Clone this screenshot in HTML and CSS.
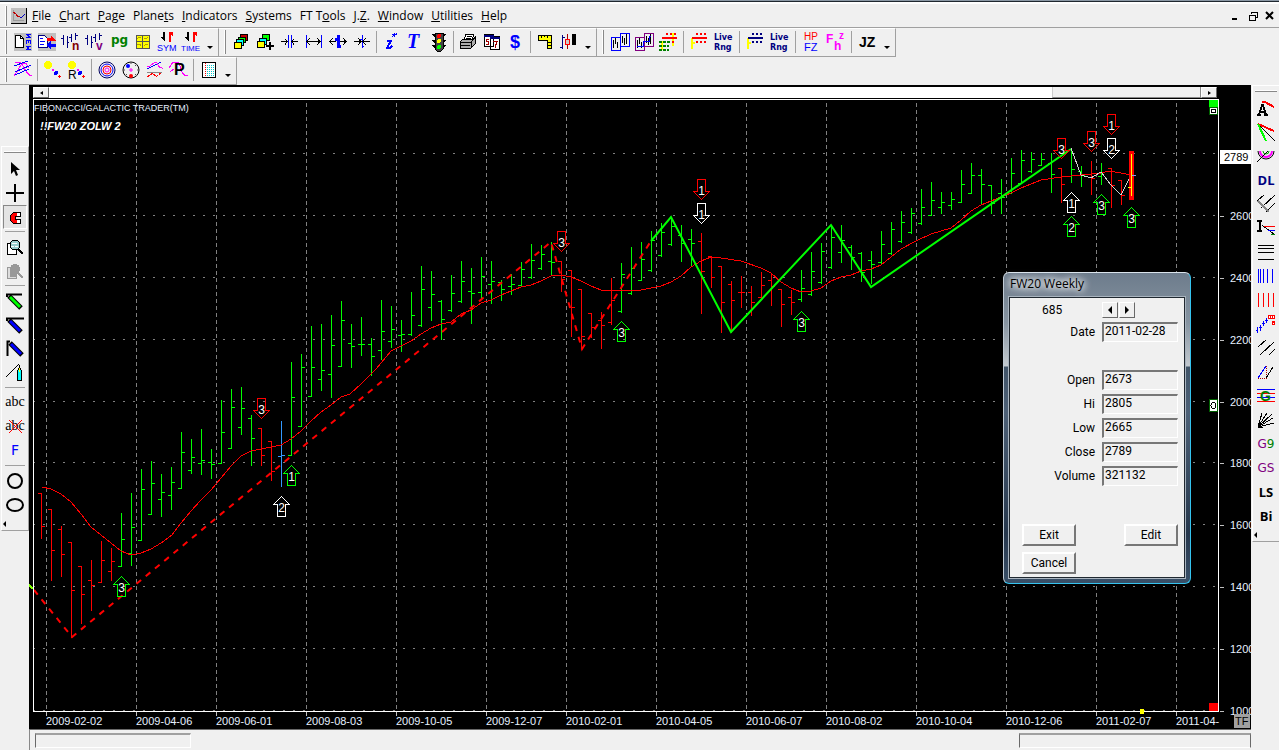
FILE: index.html
```html
<!DOCTYPE html>
<html lang="en">
<head>
<meta charset="utf-8">
<title>Galactic Trader</title>
<link rel="stylesheet" href="styles.css">
</head>
<body>
<div class="app">
  <div class="caption-edge"></div>
  <nav class="menubar">
    <span class="grip"></span>
    <svg class="doc-icon" viewBox="0 0 16 16"><path d="M0 0h16v16H0z" fill="#c0c0c0"/><path d="M15.500 0v15.500H0" fill="none" stroke="#000"/><path d="M2 2v10h11" fill="none" stroke="#999"/><path d="M2 4l3 2 2 3 2-1" fill="none" stroke="#c00000"/><path d="M9 9h2l3-3" fill="none" stroke="#0000c0"/></svg>
    <button class="menu"><u>F</u>ile</button>
    <button class="menu"><u>C</u>hart</button>
    <button class="menu"><u>P</u>age</button>
    <button class="menu">Plane<u>t</u>s</button>
    <button class="menu"><u>I</u>ndicators</button>
    <button class="menu"><u>S</u>ystems</button>
    <button class="menu">FT T<u>o</u>ols</button>
    <button class="menu">J.<u>Z</u>.</button>
    <button class="menu"><u>W</u>indow</button>
    <button class="menu"><u>U</u>tilities</button>
    <button class="menu"><u>H</u>elp</button>
    <span class="window-buttons">
      <button aria-label="Minimize"><svg viewBox="0 0 10 10"><path d="M1 8h5" stroke="#000" stroke-width="2"/></svg></button>
      <button aria-label="Restore"><svg viewBox="0 0 10 10"><path d="M3 3V1h6v5H7M3 1.500h6M1 4h6v5H1zM1 4.500h6" fill="none" stroke="#000"/></svg></button>
      <button aria-label="Close"><svg class="smooth" viewBox="0 0 10 10"><path d="M1 1l7 7M8 1L1 8" stroke="#000" stroke-width="2"/></svg></button>
    </span>
  </nav>

  <div class="toolrow">
    <div class="toolbar">
      <span class="grip"></span>
      <button aria-label="New chart"><svg viewBox="0 0 20 20"><path d="M1 1h18v18H1z" fill="#c0c0c0"/><path d="M2.500 3.500h5l3 3v9h-8z" fill="#fff" stroke="#000"/><path d="M7.500 3.500v3h3" fill="none" stroke="#000"/><path d="M13 2.500h5M13 5.500h5M14 2.500l3 3M13.500 8v4M17.500 8v4M15.500 8v3M13 8.500h5M13 14.500h5M13 17.500h5M17 14.500l-3 1.500 3 1.500" fill="none" stroke="#00f"/></svg></button>
      <button aria-label="Swap chart"><svg viewBox="0 0 20 20"><path d="M1 1h18v18H1z" fill="#c0c0c0"/><path d="M1.500 3.500h6l3 3v9h-9z" fill="#fff" stroke="#000080"/><path d="M3 6.500h3M3 9.500h5M3 12.500h4" stroke="#00f"/><path d="M10 6h4V3l5 6h-9z" fill="red"/><path d="M19 12h-5V9l-5 4 5 4v-2h5z" fill="#00f"/></svg></button>
      <button aria-label="Chart n"><svg viewBox="0 0 20 20"><path d="M2.500 3v10M0 6.500h2M6.500 4v12M6 10.500h2M10.500 2v8M8 5.500h2M14.500 1v7M14 3.500h3" stroke="#000080"/><text x="11" y="18" class="t12 maroon">n</text></svg></button>
      <button aria-label="Chart v"><svg viewBox="0 0 20 20"><path d="M2.500 3v10M0 6.500h2M6.500 4v12M6 10.500h2M10.500 2v8M8 5.500h2M14.500 1v7M14 3.500h3" stroke="#000080"/><text x="11" y="18" class="t12 purple">v</text></svg></button>
      <button aria-label="Page"><svg viewBox="0 0 20 20"><text x="2" y="12" class="t12 green mono">pg</text></svg></button>
      <button aria-label="Grid"><svg viewBox="0 0 20 20"><path d="M3.500 3.500h13v13h-13z" fill="#ff0" stroke="#555"/><path d="M9.500 3v13M3 9.500h13" stroke="#555"/><path d="M4 7l2-2 2 1M11 6l2 1 2-2M4 13l3-1 1 2M11 14l2-2 2 1" fill="none" stroke="#b0a000"/></svg></button>
      <button aria-label="Symbol"><svg viewBox="0 0 20 20"><path d="M6 0h2v10l-5-5h3z"/><path d="M12 0h4v5l-2-2v7h-2z" fill="red"/><text x="0" y="19" class="t9 blue">SYM</text></svg></button>
      <button aria-label="Time"><svg viewBox="0 0 20 20"><path d="M6 0h2v10l-5-5h3z"/><path d="M12 0h4v5l-2-2v7h-2z" fill="red"/><text x="0" y="19" class="t8 blue">TIME</text></svg></button>
      <button class="more" aria-label="More"></button>
    </div>
    <div class="toolbar">
      <span class="grip"></span>
      <button aria-label="Cascade"><svg viewBox="0 0 20 20"><path d="M8.500 2.500h7v6h-7z" fill="#c00000" stroke="#000"/><path d="M6.500 5.500h7v5h-7z" fill="#0f0" stroke="#000"/><path d="M4.500 7.500h7v6h-7z" fill="#0ff" stroke="#000"/><path d="M2.500 10.500h7v6h-7z" fill="#ff0" stroke="#000"/></svg></button>
      <button aria-label="Add to cascade"><svg viewBox="0 0 20 20"><path d="M6.500 2.500h7v6h-7z" fill="#0f0" stroke="#000"/><path d="M3.500 6.500h7v6h-7z" fill="#0ff" stroke="#000"/><path d="M1.500 9.500h7v6h-7z" fill="#ff0" stroke="#000"/><path d="M14 10v8M10 14h8" stroke="#000" stroke-width="2"/></svg></button>
      <button aria-label="Compress"><svg viewBox="0 0 20 20"><path d="M8.500 3v13M11.500 3v13" stroke="#00f"/><path d="M1 9.500h6M5 7l2 2.500-2 3M18 9.500h-6M14 7l-2 2.500 2 3" fill="none" stroke="#000"/></svg></button>
      <button aria-label="Expand"><svg viewBox="0 0 20 20"><path d="M2.500 3v13M17.500 3v13" stroke="#00f"/><path d="M3 9.500h13M6 6L3 9.500 6 13M13 6l3 3.500-3 3.500" fill="none" stroke="#000"/></svg></button>
      <button aria-label="Widen bars"><svg viewBox="0 0 20 20"><path d="M10.500 3v13M7 7.500h3M10 14.500h3" stroke="#00f" stroke-width="3"/><path d="M2 9.500h6M5 6L2 9.500 5 13M12 9.500h6M15 6l3 3.500-3 3.500" fill="none" stroke="#000"/></svg></button>
      <button aria-label="Narrow bars"><svg viewBox="0 0 20 20"><path d="M10.500 3v13M10 14.500h2M8 7.500h2" stroke="#00f"/><path d="M2 9.500h7M6 6l3 3.500L6 13M18 9.500h-7M14 6l-3 3.500 3 3.500" fill="none" stroke="#000"/></svg></button>
      <span class="sep"></span>
      <button aria-label="Info"><svg viewBox="0 0 20 20"><path d="M11 2.500h5M13.500 1v4M11 5l5-4" stroke="#00f"/><path d="M6 8.500h4L6 16h3l2-2" fill="none" stroke="#00f" stroke-width="2"/></svg></button>
      <button aria-label="Text"><svg viewBox="0 0 20 20"><text x="2" y="16" class="t20 blue serif">T</text></svg></button>
      <button aria-label="Signals"><svg viewBox="0 0 20 20"><path d="M6 1h8v16l-2 2H8l-2-2z" fill="#444" stroke="#000"/><path d="M2 2h4v3zM14 2h4l-4 3zM2 8h4v3zM14 8h4l-4 3zM2 13h4v3zM14 13h4l-4 3z"/><circle cx="10" cy="4" r="2" fill="red"/><circle cx="10" cy="9" r="2" fill="#ff0"/><circle cx="10" cy="15" r="2" fill="#0f0"/></svg></button>
      <span class="sep"></span>
      <button aria-label="Print"><svg viewBox="0 0 20 20"><path d="M6 8l2-6h8l-2 6z" fill="#fff" stroke="#000"/><path d="M9 4.500h5M8 6.500h5" stroke="#000"/><path d="M2 10l3-3h10l2-2v7l-4 4H2z" fill="#aaa" stroke="#000"/><path d="M2 10.500h11v5M13 10l4-4M3 13.500h9" fill="none" stroke="#000"/></svg></button>
      <button aria-label="Calendar"><svg viewBox="0 0 20 20"><path d="M2.500 2.500h9v12h-9zM8.500 4.500h9v13h-9z" fill="#fff" stroke="#000"/><path d="M2 3.500h10M8 5.500h10" stroke="#000080" stroke-width="2"/><path d="M6.500 7h-2v2.500h2V12h-3M11 9.500h4l-2 6" fill="none" stroke="#a00000"/></svg></button>
      <button aria-label="Prices"><svg viewBox="0 0 20 20"><text x="4" y="16" class="t18 bold blue">$</text></svg></button>
      <span class="sep"></span>
      <button aria-label="Measure"><svg viewBox="0 0 20 20"><path d="M3.500 3.500h13v13h-4v-8h-9z" fill="#ff0" stroke="#000"/><path d="M6.500 3v3M9.500 3v2M12.500 3v3M13 10.500h3M13 13.500h3" stroke="#000"/></svg></button>
      <button aria-label="Bar style"><svg viewBox="0 0 20 20"><path d="M3.500 3v14M1 15.500h2M3 5.500h3" stroke="#000080"/><path d="M8.500 2v15" stroke="#a00"/><path d="M6.500 7.500h4v5h-4z" fill="#ccc" stroke="red"/><path d="M13 2h4v11h-4z"/></svg></button>
      <button class="more" aria-label="More"></button>
    </div>
    <div class="toolbar roomy">
      <span class="grip"></span>
      <button aria-label="Chart set blue"><svg viewBox="0 0 20 20"><path d="M1.500 5.500h9v13h-9zM10.500 1.500h9v13h-9z" fill="none" stroke="#00f"/><path d="M3.500 8v8M5.500 6v6M7.500 10v6M12.500 4v7M14.500 6v7M16.500 2v10" stroke="#000"/></svg></button>
      <button aria-label="Chart set purple"><svg viewBox="0 0 20 20"><path d="M1.500 5.500h9v13h-9zM10.500 1.500h9v13h-9z" fill="none" stroke="purple"/><path d="M3.500 8v8M5.500 6v6M7.500 10v6M12.500 4v7M14.500 6v7M16.500 2v10" stroke="#000"/><path d="M3 14.500h6v-5h6v-5h2" fill="none" stroke="#00f"/></svg></button>
      <button aria-label="Range lines"><svg viewBox="0 0 20 20"><path d="M15 1v13M4 9v9" stroke="#ff0" stroke-width="2"/><path d="M8 2h11M10 10h8" stroke="red" stroke-width="2" stroke-dasharray="2 2"/><path d="M4 6h15" stroke="red" stroke-width="2"/><path d="M1 10h11M1 14h10M1 18h10" stroke="green" stroke-width="2" stroke-dasharray="3 1"/></svg></button>
      <span class="sep"></span>
      <button aria-label="Live lines red"><svg viewBox="0 0 20 20"><path d="M2 6v11M2 11h3" stroke="#ff0" stroke-width="2"/><path d="M6 2h10M6 10h10" stroke="red" stroke-width="2" stroke-dasharray="2 2"/><path d="M2 6h15" stroke="red" stroke-width="2"/></svg></button>
      <button aria-label="Live range red"><svg viewBox="0 0 20 20"><text x="0" y="8" class="t8 navy bold wide-face">Live</text><text x="0" y="18" class="t8 navy bold wide-face">Rng</text></svg></button>
      <span class="sep"></span>
      <button aria-label="Live lines blue"><svg viewBox="0 0 20 20"><path d="M2 6v11M2 11h3" stroke="#ff0" stroke-width="2"/><path d="M6 2h10M6 10h10" stroke="#000080" stroke-width="2" stroke-dasharray="2 2"/><path d="M2 6h15" stroke="#000080" stroke-width="2"/></svg></button>
      <button aria-label="Live range blue"><svg viewBox="0 0 20 20"><text x="0" y="8" class="t8 navy bold wide-face">Live</text><text x="0" y="18" class="t8 navy bold wide-face">Rng</text></svg></button>
      <span class="sep"></span>
      <button aria-label="HP FZ"><svg viewBox="0 0 20 20"><text x="2" y="8" class="t10 red">HP</text><text x="2" y="19" class="t11 blue">FZ</text></svg></button>
      <button aria-label="Fhz"><svg viewBox="0 0 20 20"><text x="0" y="11" class="t12 magenta bold">F</text><text x="8" y="18" class="t12 magenta bold">h</text><text x="13" y="7" class="t10 magenta bold">z</text></svg></button>
      <span class="sep"></span>
      <button aria-label="JZ"><svg viewBox="0 0 20 20"><text x="1" y="15" class="t14 bold">JZ</text></svg></button>
      <button class="more" aria-label="More"></button>
    </div>
  </div>

  <div class="toolrow">
    <div class="toolbar roomy">
      <span class="grip"></span>
      <button aria-label="Planet waves"><svg viewBox="0 0 20 20"><path d="M2 2h4c3 0 4 5 7 9s3 5 6 5M1 16l4-6 4-7h4l3 5" fill="none" stroke="#f0f"/><path d="M1 6l14-5M2 12l16-7M2 15l14-6" stroke="#00f"/></svg></button>
      <span class="sep"></span>
      <button aria-label="Planets"><svg viewBox="0 0 20 20"><circle cx="5" cy="5" r="4" fill="#ff0"/><circle cx="13" cy="13" r="2" fill="#00f"/><path d="M9 9h2v2H9z" fill="#f0f"/><path d="M16.500 15v3M15 16.500h3" stroke="red"/></svg></button>
      <button aria-label="Retrograde planets"><svg viewBox="0 0 20 20"><circle cx="5" cy="5" r="4" fill="#ff0"/><circle cx="13" cy="13" r="2" fill="#00f"/><path d="M10 9h2v2h-2z" fill="#f0f"/><path d="M16.500 15v3M15 16.500h3" stroke="red"/><text x="1" y="19" class="t12">R</text></svg></button>
      <span class="sep"></span>
      <button aria-label="Orbits"><svg class="smooth" viewBox="0 0 20 20"><g fill="none"><circle cx="10" cy="10" r="8" stroke="#000060"/><circle cx="10" cy="10" r="6" stroke="#00f"/><circle cx="10" cy="10" r="4" stroke="red"/><circle cx="10" cy="10" r="2" stroke="#f0f"/></g></svg></button>
      <button aria-label="Wheel"><svg class="smooth" viewBox="0 0 20 20"><circle cx="10" cy="10" r="8" fill="none" stroke="#000"/><path d="M10 2v2M18 10h-2M2 10h2M16 4l-2 2M16 16l-2-2M4 16l2-2" stroke="#555"/><circle cx="7" cy="6" r="2" fill="#00f"/><circle cx="10" cy="16" r="2" fill="red"/><path d="M10 8v4M8 10h4" stroke="#f0f"/></svg></button>
      <button aria-label="Aspects"><svg viewBox="0 0 20 20"><path d="M2 9l14-7" stroke="#00f"/><path d="M2 6h3l5-4c4 0 2 7 8 6" fill="none" stroke="#f0f"/><path d="M2 12.500h15" stroke="#888"/><path d="M2 17l6-4 3 4 6-5" fill="none" stroke="red" stroke-dasharray="3 1"/></svg></button>
      <button aria-label="P wave"><svg viewBox="0 0 20 20"><path d="M0 8l4-6h5c4 4 2 14 10 14M1 12l4-3" fill="none" stroke="#f0f"/><text x="5" y="15" class="t16 bold">P</text></svg></button>
      <span class="sep"></span>
      <button aria-label="Table"><svg viewBox="0 0 20 20"><path d="M3.500 2.500h13v15h-13z" fill="#fff" stroke="#000"/><path d="M6.500 3v14" fill="none" stroke="red" stroke-dasharray="1 1"/><path d="M8 5.500h7M8 7.500h7M8 9.500h7M8 11.500h7M8 13.500h7M8 15.500h7" stroke="#0cc" stroke-dasharray="1 1"/></svg></button>
      <button class="more" aria-label="More"></button>
    </div>
  </div>

  <main class="workspace">
    <aside class="rail rail-left">
      <span class="rail-grip"></span>
      <button aria-label="Pointer"><svg class="smooth" viewBox="0 0 20 20"><path d="M6 3v12l3-3 2 5 2-1-2-5h4z"/></svg></button>
      <button aria-label="Crosshair"><svg viewBox="0 0 20 20"><path d="M10 1v18M1 10h18" stroke="#000" stroke-width="2"/></svg></button>
      <button class="pressed" aria-label="Magnet"><svg viewBox="0 0 20 20"><path d="M15.500 5.500h-7l-3 3v5l3 3h7v-4h-5v-3h5z" fill="red" stroke="#000"/><path d="M12 6h3v3h-3zM12 13h3v3h-3z" fill="#fff"/></svg></button>
      <span class="rail-sep"></span>
      <button aria-label="Zoom in"><svg viewBox="0 0 20 20"><path d="M2.500 6.500h9v11h-9z" fill="#fff" stroke="#000"/><circle cx="10" cy="8" r="5" fill="#9cc" stroke="#000"/><path d="M7 6.500h5M6 9.500h3M10 9.500h3" stroke="#fff"/><path d="M13 12l5 5" stroke="#000" stroke-width="2"/></svg></button>
      <button aria-label="Zoom out" disabled><svg viewBox="0 0 20 20"><path d="M2.500 6.500h9v11h-9z" fill="#ddd" stroke="#999"/><circle cx="10" cy="8" r="5" fill="#999"/><path d="M5 10h6v6H5z" fill="#999"/><path d="M13 12l5 5" stroke="#999" stroke-width="2"/></svg></button>
      <span class="rail-sep"></span>
      <button aria-label="Green pen"><svg class="smooth" viewBox="0 0 20 20"><path d="M4 5l12 12" stroke="#000" stroke-width="5"/><path d="M5 6l10 10" stroke="#0f0" stroke-width="3"/><path d="M2 6V3.500h15" fill="none" stroke="#000" stroke-width="2"/></svg></button>
      <button aria-label="Blue pen"><svg class="smooth" viewBox="0 0 20 20"><path d="M4 5l12 12" stroke="#000" stroke-width="5"/><path d="M5 6l10 10" stroke="#00f" stroke-width="3"/><path d="M2 6V3.500h17" fill="none" stroke="#000" stroke-width="2"/></svg></button>
      <button aria-label="Blue angle pen"><svg class="smooth" viewBox="0 0 20 20"><path d="M5 4l12 12" stroke="#000" stroke-width="5"/><path d="M6 5l10 10" stroke="#00f" stroke-width="3"/><path d="M2.500 17V2.500H5" fill="none" stroke="#000" stroke-width="2"/></svg></button>
      <button aria-label="Marker"><svg viewBox="0 0 20 20"><path d="M1 14L14 1" stroke="#000"/><path d="M12.500 8.500l2-5 2 5v9h-4z" fill="#0ff" stroke="#000"/><path d="M14.500 5v4" stroke="#ff0"/></svg></button>
      <span class="rail-sep"></span>
      <button class="word" aria-label="Label">abc</button>
      <button class="word strike" aria-label="Remove label">abc<svg viewBox="0 0 20 20"><path d="M4 3l13 13M17 3L4 16" stroke="red"/></svg></button>
      <button class="word f" aria-label="F">F</button>
      <span class="rail-sep"></span>
      <button aria-label="Circle"><svg class="smooth" viewBox="0 0 20 20"><circle cx="10" cy="10" r="7" fill="none" stroke="#000" stroke-width="2"/></svg></button>
      <button aria-label="Ellipse"><svg class="smooth" viewBox="0 0 20 20"><ellipse cx="10" cy="10" rx="8" ry="6" fill="none" stroke="#000" stroke-width="2"/></svg></button>
      <button class="rail-more" aria-label="More"></button>
    </aside>

    <section class="center">
      <div class="scrollbar">
        <button aria-label="Scroll left"><i class="tri left"></i></button>
        <span class="track"></span><span class="thumb"></span>
        <button aria-label="Scroll right"><i class="tri right"></i></button>
      </div>
      <svg id="chart" class="chart" viewBox="29 98 1222 631" preserveAspectRatio="xMinYMin meet"></svg>

      <form class="dialog">
        <h1>FW20 Weekly</h1>
        <div class="client">
          <div class="head"><output>685</output><span class="spin"><button type="button" aria-label="Previous bar"><i class="tri left"></i></button><button type="button" aria-label="Next bar"><i class="tri right"></i></button></span></div>
          <label for="date">Date</label><input id="date" value="2011-02-28">
          <span class="gap"></span>
          <label for="open">Open</label><input id="open" value="2673">
          <label for="hi">Hi</label><input id="hi" value="2805">
          <label for="low">Low</label><input id="low" value="2665">
          <label for="close">Close</label><input id="close" value="2789">
          <label for="volume">Volume</label><input id="volume" value="321132">
          <div class="actions">
            <button type="button">Exit</button><button type="button">Edit</button>
            <button type="button">Cancel</button>
          </div>
        </div>
      </form>

      <footer class="status"><span class="panel small"></span><span class="panel wide"></span></footer>
    </section>

    <aside class="rail rail-right">
      <span class="rail-grip"></span>
      <button aria-label="Angle"><svg viewBox="0 0 20 20"><path d="M3 17L6.500 6 10 17M4 13.500h5M1 17h4M8 17h4" fill="none" stroke="#000" stroke-width="2" stroke-linejoin="bevel"/><path d="M6 4h3l9 5" fill="none" stroke="red" stroke-width="2"/></svg></button>
      <button aria-label="Fan"><svg viewBox="0 0 20 20"><path d="M2 2l16 7" stroke="red" stroke-width="2"/><path d="M2 2l17 17" stroke="#000"/><path d="M2 2l8 17" stroke="#0f0" stroke-width="2"/></svg></button>
      <button aria-label="Arcs"><svg class="smooth" viewBox="0 0 20 20"><g fill="none"><path d="M2 5a8 8 0 0 0 16 0" stroke="#000"/><path d="M4 5a6 6 0 0 0 12 0" stroke="#f0f" stroke-width="2"/><path d="M7 5a3 3 0 0 0 6 0" stroke="#0a0"/><path d="M1 16L12 5" stroke="#000"/></g></svg></button>
      <button class="glyph navy bold" aria-label="DL">DL</button>
      <button aria-label="Pitchfork"><svg viewBox="0 0 20 20"><path d="M1 7l7-6M5 14L19 1M10 18l9-9" stroke="#000"/><path d="M2 7l11 11" stroke="#888" stroke-width="2"/></svg></button>
      <button aria-label="Fibonacci"><svg viewBox="0 0 20 20"><path d="M1 3h5M3.500 3v10M1 13h5" fill="none" stroke="#000" stroke-width="2"/><path d="M6 7l13 10" stroke="#000"/><path d="M8 8.500h11" stroke="red"/><path d="M12 12.500h7" stroke="#00f"/><path d="M15 16.500h4" stroke="green"/></svg></button>
      <button aria-label="Levels"><svg viewBox="0 0 20 20"><path d="M2 3.500h16M2 6.500h16M2 10.500h16M2 17.500h16" stroke="#000"/></svg></button>
      <button aria-label="Blue cycles"><svg viewBox="0 0 20 20"><path d="M2.500 3v14M4.500 3v14M7.500 3v14M11.500 3v14M16.500 3v14" stroke="#00f"/></svg></button>
      <button aria-label="Red cycles"><svg viewBox="0 0 20 20"><path d="M2.500 3v14M7.500 3v14M12.500 3v14M17.500 3v14" stroke="red"/></svg></button>
      <button aria-label="Pattern"><svg viewBox="0 0 20 20"><path d="M1.500 13v6M4.500 11v6M7.500 7v5M10.500 4v5M0 16.500h1M3 13.500h3M6 9.500h3M9 6.500h3" stroke="#00f"/><path d="M12 1h7v4h-7zM16 7h3v4h-3z" fill="red"/><path d="M13 2.500h5M13 3.500h5M17 9.500h2" stroke="#fff" stroke-dasharray="1 1"/></svg></button>
      <button aria-label="Channel"><svg viewBox="0 0 20 20"><path d="M2 9l8-7M4 17L18 4M13 17l6-6" stroke="#000"/></svg></button>
      <button aria-label="Triangle"><svg viewBox="0 0 20 20"><path d="M2 16L10 4" stroke="#00f"/><path d="M10.500 4v12M2 16.500h9" stroke="#a00" stroke-dasharray="1 1"/><path d="M10 16l7-11" stroke="#000"/></svg></button>
      <button aria-label="Gann levels"><svg viewBox="0 0 20 20"><path d="M1 3.500h18M1 11.500h18" stroke="#00f"/><path d="M1 7.500h18M1 15.500h18" stroke="red"/><text x="4" y="15" class="t14 bold green">G</text></svg></button>
      <button aria-label="Rays"><svg viewBox="0 0 20 20"><path d="M2 17L6 3M2 17L11 3M2 17L16 4M2 17l15-9M2 17l16-4" stroke="#000"/><path d="M2 12v6h5z"/></svg></button>
      <button class="glyph purple" aria-label="G9">G<span class="green">9</span></button>
      <button class="glyph purple" aria-label="GS">GS</button>
      <button class="glyph bold" aria-label="LS">LS</button>
      <button class="glyph bold" aria-label="Bi">Bi</button>
      <button class="rail-more" aria-label="More"></button>
    </aside>
  </main>
</div>
<script src="chart.js"></script>
</body>
</html>
```
FILE: styles.css
```css
* { box-sizing: border-box; }
body { margin: 0; background: #f0f0f0; font-family: "Liberation Sans", Arial, sans-serif; font-size: 11px; color: #000; }
button { background: none; border: 0; padding: 0; margin: 0; font: inherit; color: inherit; }
svg { display: block; shape-rendering: crispEdges; }
svg.smooth { shape-rendering: auto; }
.app { min-height: 100vh; display: flex; flex-direction: column; overflow: hidden; }
.caption-edge { height: 4px; background: #fff; border-top: 1px solid #8b98a5; box-shadow: inset 0 1px 0 #202830; }

.menubar { height: 24px; display: flex; align-items: center; gap: 8px; padding: 0 4px 0 5px; border-bottom: 1px solid #a0a0a0; font-family: "Open Sans", sans-serif; font-size: 12px; }
.menubar .grip { height: 20px; margin-right: -4px; }
.grip { width: 2px; height: 24px; border-right: 1px solid #888; border-left: 1px solid #fff; flex: none; }
.doc-icon { width: 16px; height: 16px; margin-right: -3px; }
.menu { white-space: nowrap; }
.window-buttons { margin-left: auto; display: flex; gap: 7px; }
.window-buttons svg { width: 10px; height: 10px; }

.toolrow { display: flex; height: 29px; }
.toolrow + .toolrow { height: 28px; }
.toolbar { display: flex; align-items: center; padding: 0 0 2px 5px; border-right: 1px solid #a0a0a0; border-bottom: 1px solid #a0a0a0; border-top: 1px solid #fff; }
.toolbar .grip { margin-right: 4px; }
.toolbar button { width: 24px; height: 24px; display: grid; place-items: center; flex: none; }
.toolbar button svg { width: 20px; height: 20px; overflow: visible; }
.sep { width: 1px; height: 22px; background: #a0a0a0; margin: 0 2px; flex: none; }
.roomy .sep { margin: 0 4px 0 3px; }
.toolrow + .toolrow .sep { margin: 0 3px 0 2px; }
.toolbar .more { width: 13px; margin-right: 2px; }
.more::after { content: ""; border: 3px solid transparent; border-top-color: #000; border-bottom: 0; margin-top: 11px; }

.t8 { font-size: 8px; } .t9 { font-size: 9px; } .t10 { font-size: 10px; } .t11 { font-size: 11px; }
.t12 { font-size: 12px; } .t14 { font-size: 14px; } .t16 { font-size: 16px; } .t18 { font-size: 18px; } .t20 { font-size: 20px; }
.t12.maroon, .t12.purple, .mono, .bold { font-weight: bold; }
.mono { font-family: "DejaVu Sans", sans-serif; font-size: 12px; }
.wide-face { font-family: "DejaVu Sans", sans-serif; }
.maroon { fill: #800000; } .purple { fill: #800080; color: #800080; } .green { fill: #008000; color: #008000; }
.blue { fill: #0000ff; } .navy { fill: #000080; color: #000080; } .red { fill: #ff0000; } .magenta { fill: #ff00ff; }
.serif { font-family: "Liberation Serif", serif; font-style: italic; font-weight: bold; }

.workspace { flex: 1; display: flex; align-items: stretch; }
.rail { width: 28px; flex: none; display: flex; flex-direction: column; align-items: center; align-self: flex-start; border-top: 1px solid #fff; border-left: 1px solid #fff; border-right: 1px solid #a0a0a0; border-bottom: 1px solid #a0a0a0; }
.rail-left { margin: 61px 0 0 1px; }
.rail-right { margin-left: 1px; width: 27px; border-right: 0; }
.rail-grip { width: 22px; height: 2px; margin: 4px 0; border-bottom: 1px solid #888; border-top: 1px solid #fff; }
.rail button { width: 24px; height: 24px; display: grid; place-items: center; }
.rail svg { width: 20px; height: 20px; overflow: visible; }
.rail-sep { width: 20px; height: 1px; background: #a0a0a0; margin: 2px 0 3px; }
.rail .pressed { border: 1px solid #fff; border-top-color: #888; border-left-color: #888; background: #e4e4e4; }
.rail .rail-more { height: 13px; place-items: center start; }
.rail-more::after { content: ""; border: 3px solid transparent; border-right-color: #000; border-left: 0; }
.rail-left .word { font-family: "Liberation Serif", serif; font-size: 14px; line-height: 22px; padding-bottom: 2px; }
.strike { position: relative; }
.strike svg { position: absolute; top: 2px; left: 2px; }
.rail-left .f { font-family: "DejaVu Sans", sans-serif; color: #0000ff; }
.rail-right .glyph { display: flex; align-items: center; justify-content: center; font-family: "DejaVu Sans", sans-serif; font-size: 12px; }
.rail-right .glyph.bold { font-family: "Open Sans", sans-serif; font-size: 13px; }

.center { flex: 1; min-width: 0; position: relative; background: #000; display: flex; flex-direction: column; padding-top: 2px; }
.scrollbar { display: flex; height: 11px; margin: 0 34px 0 4px; }
.scrollbar button { width: 16px; background: #f0f0f0; border: 1px solid #fff; border-right-color: #696969; border-bottom-color: #696969; display: grid; place-items: center; }
.track { flex: 1; background: #fff; }
.thumb { width: 149px; background: #f0f0f0; border-right: 1px solid #888; border-bottom: 1px solid #888; border-left: 1px solid #ccc; }
.tri { border: 4px solid transparent; }
.tri.left { border-right-color: #000; border-left: 0; }
.tri.right { border-left-color: #000; border-right: 0; }
.scrollbar .tri { border-top-width: 2px; border-bottom-width: 2px; }
.scrollbar .left { border-right-width: 3px; }
.scrollbar .right { border-left-width: 3px; }
.chart { width: 100%; height: auto; }
.chart text { font-size: 11px; fill: #e6f0ff; }
.chart .product { font-size: 9px; }
.chart .symbol { font-weight: bold; font-style: italic; fill: #fff; }
.chart .num { font-size: 12px; fill: #fff; text-anchor: middle; }
.chart .dark { fill: #000; }

.status { flex: 1; min-height: 20px; display: flex; justify-content: space-between; padding: 3px 0 2px 5px; background: #f0f0f0; border-top: 1px solid #696969; border-left: 1px solid #888; }
.panel { border: 1px solid #fff; border-top: 2px solid #a0a0a0; border-left: 1px solid #696969; }
.small { width: 156px; }
.wide { width: 232px; border-right: 1px solid #696969; }

.dialog { position: absolute; top: 187px; right: 60px; width: 188px; padding: 0 5px 5px; border: 1px solid #101820; border-color: #dbe4ec #35c4f0 #35c4f0 #c0cbd5; border-radius: 6px; background: linear-gradient(180deg, #6d7c8c 0, #8794a1 50px, #c3c9cf 93px, #415468 94px, #4d6076 140px, #26374c 260px, #3a5068 100%); font-family: "Open Sans", sans-serif; }
.dialog h1 { margin: 0; height: 24px; padding-left: 1px; line-height: 22px; font-size: 12px; font-weight: normal; text-shadow: 0 0 8px #fff, 0 0 6px #fff, 0 0 10px #fff; }
.client { display: grid; grid-template-columns: 1fr 76px; gap: 4px 7px; padding: 4px 6px 3px; align-items: center; background: #f0f0f0; border: 1px solid #202830; box-shadow: 0 0 0 1px #a9b4bf; font-family: Roboto, sans-serif; font-size: 12px; }
.head { grid-column: 1 / -1; display: flex; height: 16px; justify-content: space-between; padding-left: 26px; align-items: center; }
.spin { width: 76px; display: flex; gap: 1px; }
.spin button { width: 16px; height: 16px; display: grid; place-items: center; background: #f0f0f0; border: 1px solid #fff; border-right-color: #696969; border-bottom-color: #696969; }
.client label { text-align: right; }
.client input { width: 76px; height: 20px; padding: 0 0 3px 1px; font: inherit; background: #f0f0f0; border: 2px solid #fff; border-top-color: #777; border-left-color: #777; border-right-width: 1px; border-bottom-width: 1px; }
.gap { grid-column: 1 / -1; height: 20px; }
.actions { grid-column: 1 / -1; margin: 34px 0 0 6px; display: grid; grid-template-columns: 54px 54px; justify-content: space-between; gap: 6px; }
.actions button { height: 22px; background: #f0f0f0; border: 2px solid #fff; border-right: 2px solid #777; border-bottom: 2px solid #777; }
```
FILE: chart.js
```js
const NS = "http://www.w3.org/2000/svg";
const chart = document.getElementById("chart");

function add(tag, attrs, text) {
  const el = document.createElementNS(NS, tag);
  for (const key in attrs) el.setAttribute(key, attrs[key]);
  if (text !== undefined) el.textContent = text;
  chart.appendChild(el);
}
const path = (d, stroke, width = 1, extra = {}) =>
  add("path", Object.assign({ d, stroke, "stroke-width": width, fill: "none" }, extra));

/* Grid and date axis */
const dates = [[46, "2009-02-02"], [136, "2009-04-06"], [216, "2009-06-01"], [306, "2009-08-03"], [396, "2009-10-05"],
  [486, "2009-12-07"], [566, "2010-02-01"], [656, "2010-04-05"], [746, "2010-06-07"], [826, "2010-08-02"],
  [916, "2010-10-04"], [1006, "2010-12-06"], [1096, "2011-02-07"], [1176, "2011-04-"]];
for (const [x, label] of dates) {
  path(`M${x + 0.5} 103V711`, "#808080", 1, { "stroke-dasharray": "4 3" });
  path(`M${x + 0.5} 712v4`, "#c0c0c0");
  add("text", { x, y: 725 }, label);
}
const levels = [[153, 2800], [215, 2600], [277, 2400], [339, 2200], [401, 2000], [462, 1800], [524, 1600], [586, 1400], [648, 1200], [710, 1000]];
for (const [y, label] of levels) {
  path(`M33 ${y + 0.5}H1218`, "#808080", 1, { "stroke-dasharray": "2 8" });
  path(`M1220 ${y + 1.5}h4`, "#c0c0c0");
  add("text", { x: 1230, y: y + 5 }, label);
}

/* Price bars, ten units apart: high, low, open, close, optional colour */
const G = "#00ff00", R = "#ff0000", B = "#3399ff";
const bars = [
  [493,538,493,526,R],[509,580,509,550,R],[526,576,529,554,R],[542,637,542,590,R],[566,623,566,594,R],[560,610,580,585,R],
  [541,582,582,560,R],[548,580,571,561,R],[513,566,566,539],[493,565,553,527],[469,540,540,489],[461,514,514,483],
  [474,516,499,492],[467,509,495,482],[432,488,488,452],[439,473,470,457],[429,474,463,460],[449,478,462,464],
  [400,463,463,432],[389,448,448,407],[387,434,427,408],[415,465,418,438],[428,465,428,455,R],[441,480,441,471,R],
  [421,486,456,455,B],[362,455,455,397],[354,426,426,367],[326,396,396,367],[324,390,379,370],[315,397,374,345],
  [301,366,366,320],[324,367,343,346],[317,355,344,344],[338,375,344,356],[300,359,350,331],[306,347,341,329],
  [320,351,335,334],[292,335,334,315],[266,326,325,289],[271,320,307,294],[300,339,301,319],[275,311,310,293],
  [261,302,301,281],[268,323,291,293],[257,299,292,276],[261,303,284,281],[280,300,282,289],[274,294,286,284],
  [262,286,285,269],[244,278,277,260],[245,269,268,254],[242,275,261,262],[261,291,261,279,R],[270,336,270,307,R],
  [289,348,289,336,R],[313,337,313,327,R],[312,348,320,325,R],[278,324,322,300,R],[263,312,311,274],[247,294,293,268],
  [242,280,280,259],[231,271,270,240],[223,256,255,232],[217,245,244,226],[225,261,235,243],[229,265,239,243],
  [233,313,241,271,R],[256,287,256,277,R],[266,332,266,302,R],[281,332,284,300,R],[276,307,292,292,R],[286,315,292,302,R],
  [272,298,297,285,R],[273,305,280,286,R],[289,326,289,304,R],[290,314,297,302,R],[270,301,299,288],[252,295,294,271],
  [243,283,282,251],[225,268,267,237],[225,262,252,240],[245,269,247,257],[252,281,253,272],[251,283,260,264],
  [231,263,262,244],[222,254,253,229],[211,242,241,222],[208,233,232,213],[189,224,223,207],[182,215,215,200],
  [192,213,207,202],[192,209,205,199],[170,202,202,184],[163,193,193,175],[169,203,175,184],[185,213,185,203],
  [179,213,193,197],[158,193,193,173],[150,183,183,160],[152,172,171,159],[153,165,165,159],[153,192,163,174],
  [168,202,168,184,R],[148,182,176,169],[166,186,171,175],[161,194,174,178,R],[163,184,176,172],[168,207,168,185,R],[180,204,180,195,R]
];
bars.forEach(([hi, lo, open, close, color = G], i) => {
  const x = 41 + i * 10;
  path(`M${x + 0.5} ${hi}V${lo + 1}M${x - 3} ${open + 0.5}h3M${x + 1} ${close + 0.5}h3`, color);
});

/* Moving average */
path("M42 487L51 489 61 494 71 502 81 514 91 527 101 535 111 543 121 551 131 555 141 553 151 549 161 543 172 535 181 523 191 511 201 500 211 490 221 478 231 466 241 456 251 451 261 449 271 447 281 445 291 439 301 431 311 421 321 412 331 405 341 397 350 394 361 384 376 369 391 351 401 346 411 341 421 334 431 328 441 324 451 322 461 314 471 310 481 303 491 300 501 295 511 291 521 287 531 285 541 281 551 276 561 275 571 277 581 281 591 286 601 290 611 291 621 290 641 290 651 288 661 286 671 282 681 276 691 267 701 261 711 257 721 258 741 261 761 268 771 273 781 282 791 288 801 292 811 291 821 288 831 281 841 277 851 275 861 271 871 269 881 265 891 257 901 249 916 241 931 234 951 228 961 220 971 211 981 205 991 201 1001 197 1011 193 1021 188 1041 180 1061 177 1081 175 1091 174 1101 173 1109 171 1121 173 1131 175", R);

/* Swing lines */
path("M29 585L33 589", "#80ff00", 2);
path("M34 590L72 637 551 242 582 349 651 241", R, 2, { "stroke-dasharray": "6 6", "shape-rendering": "auto" });
path("M651 241L671 217 731 332 831 225 871 287 1071 149", G, 2, { "shape-rendering": "auto" });
path("M1071 148L1081 175 1091 178 1101 172 1111 185 1121 195 1131 175", "#d0d0d0");

/* Selected bar */
path("M1131.500 153V198", R, 5, { "stroke-linecap": "round" });
path("M1131.500 154V196M1128 187.500h3", "#ffff00");
path("M1132 175.500h4", "#80a0ff");

/* Signal arrows: x, top, direction, colour, count */
const marks = [[261,398,"d",R,3],[291,465,"u",G,1],[281,496,"u","#fff",2],[121,576,"u",G,3],[561,231,"d",R,3],[621,321,"u",G,3],
  [701,179,"d",R,1],[701,203,"d","#fff",1],[801,311,"u",G,3],[1061,138,"d",R,3],[1071,192,"u","#fff",1],[1071,216,"u",G,2],
  [1091,131,"d",R,3],[1111,114,"d",R,1],[1111,138,"d","#fff",2],[1101,194,"u",G,3],[1131,207,"u",G,3]];
for (const [x, y, dir, color, n] of marks) {
  const cx = x + 0.5, top = y + 0.5;
  path(dir === "d" ? `M${cx - 4} ${top}h8v12h4l-8 8l-8 -8h4z` : `M${cx} ${top}l8 8h-4v12h-8v-12h-4z`, color);
  add("text", { class: "num", x: cx, y: y + 16 }, n);
}

/* Frame and corner markers */
path("M33.500 711.500V99.500H1218.500V711.500z", "#fff");
add("rect", { x: 1209, y: 100, width: 9, height: 7, fill: G });
add("rect", { x: 1209.5, y: 107.5, width: 8, height: 7, fill: "#fff", stroke: "#006000" });
add("rect", { x: 1211.5, y: 109.5, width: 4, height: 3, fill: "#fff", stroke: "#000" });
add("rect", { x: 1209.5, y: 399.5, width: 8, height: 12, fill: "#fff", stroke: "#006000" });
add("ellipse", { cx: 1213.5, cy: 405.5, rx: 2.5, ry: 3, fill: "none", stroke: "#000" });
add("rect", { x: 1209, y: 703, width: 9, height: 8, fill: R });
add("rect", { x: 1140, y: 709, width: 4, height: 5, fill: "#ffff00" });
add("rect", { x: 1220, y: 150, width: 31, height: 14, fill: "#fff" });
add("text", { x: 1224, y: 161, class: "dark" }, "2789");
add("rect", { x: 1234, y: 714, width: 16, height: 14, fill: "#a0a0a0" });
add("text", { x: 1235, y: 725, class: "dark" }, "TF");

/* Titles */
add("text", { x: 34, y: 111, class: "product" }, "FIBONACCI/GALACTIC TRADER(TM)");
add("text", { x: 40, y: 130, class: "symbol" }, "!!FW20 ZOLW 2");
```
